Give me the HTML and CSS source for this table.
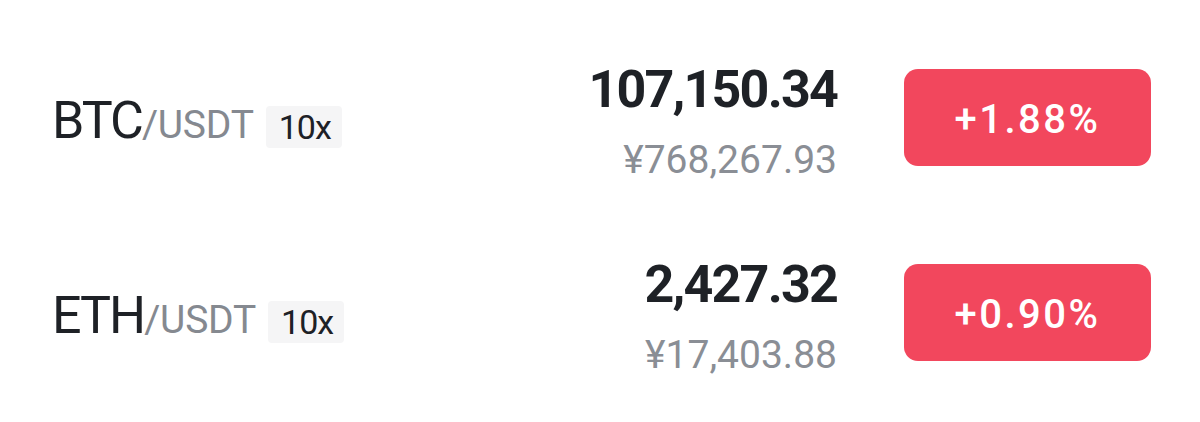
FILE: index.html
```html
<!DOCTYPE html>
<html>
<head>
<meta charset="utf-8">
<link rel="stylesheet" href="styles.css">
</head>
<body>
<div class="list">
  <div class="row">
    <div class="pair">
      <span class="base">BTC</span><span class="quote">/USDT</span>
      <span class="lev">10x</span>
    </div>
    <div class="prices">
      <div class="last">107,150.34</div>
      <div class="fiat">¥768,267.93</div>
    </div>
    <div class="change">+1.88%</div>
  </div>
  <div class="row">
    <div class="pair">
      <span class="base">ETH</span><span class="quote">/USDT</span>
      <span class="lev">10x</span>
    </div>
    <div class="prices">
      <div class="last">2,427.32</div>
      <div class="fiat">¥17,403.88</div>
    </div>
    <div class="change">+0.90%</div>
  </div>
</div>
</body>
</html>
```
FILE: styles.css
```css
html, body {
  margin: 0;
  padding: 0;
  background: #ffffff;
}
body {
  font-family: Roboto, "Liberation Sans", sans-serif;
  width: 1200px;
  height: 422px;
  overflow: hidden;
}
.list {
  padding: 20px 49px 0 52px;
  display: flex;
  flex-direction: column;
}
.row {
  height: 195px;
  display: flex;
  align-items: center;
}
.pair {
  flex: 1;
  display: flex;
  align-items: baseline;
  padding-top: 7px;
}
.base {
  font-size: 52px;
  color: #1e2126;
  letter-spacing: -2px;
  line-height: 1;
}
.quote {
  font-size: 39px;
  color: #858990;
  letter-spacing: -0.2px;
  line-height: 1;
}
.lev {
  margin-left: 12px;
  background: #f5f5f6;
  border-radius: 4px;
  font-size: 34px;
  color: #1e2126;
  line-height: 42px;
  height: 42px;
  padding: 0 11px 0 13px;
  letter-spacing: -1px;
  position: relative;
  top: 1px;
}
.prices {
  display: flex;
  flex-direction: column;
  align-items: flex-end;
  padding-top: 8px;
}
.last {
  font-size: 52px;
  font-weight: 700;
  color: #1e2126;
  letter-spacing: -1.8px;
  line-height: 60px;
}
.fiat {
  font-size: 39px;
  color: #8a8e95;
  letter-spacing: 0px;
  line-height: 48px;
  margin-top: 16px;
}
.change {
  margin-left: 67px;
  width: 247px;
  height: 97px;
  border-radius: 14px;
  background: #f2475d;
  color: #ffffff;
  font-size: 40px;
  font-weight: 500;
  display: flex;
  align-items: center;
  justify-content: center;
  letter-spacing: 2.5px;
  padding-top: 4px;
  box-sizing: border-box;
}
```
